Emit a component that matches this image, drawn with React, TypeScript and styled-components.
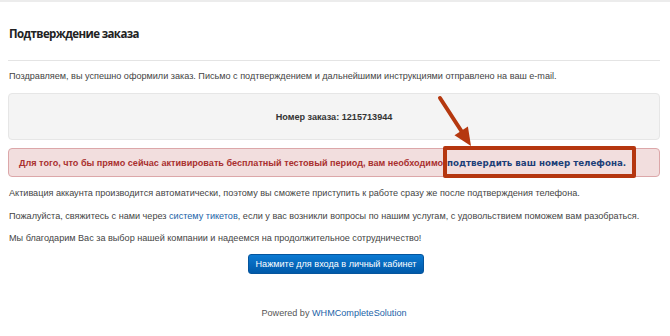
import React from "react";
import styled, { createGlobalStyle } from "styled-components";

const Global = createGlobalStyle`
  html, body { margin: 0; padding: 0; background: #fff; }
  body { font-family: "Liberation Sans", Arial, sans-serif; color: #333; }
`;

const TopBar = styled.div`
  height: 2px;
  background: #ececec;
`;

const Page = styled.div`
  width: 652px;
  padding: 0 10px 0 8px;
  font-size: 9.1px;
  line-height: 14px;
`;

const Title = styled.h1`
  margin: 24px 0 0 1px;
  font-family: "Open Sans", sans-serif;
  font-weight: 700;
  font-size: 11.5px;
  letter-spacing: -0.6px;
  line-height: 16px;
  color: #222;
`;

const Rule = styled.hr`
  margin: 18px 0 0 0;
  border: 0;
  border-top: 1px solid #e4e4e4;
`;

const Para = styled.p<{ $top: number }>`
  margin: ${(p) => p.$top}px 0 0 1px;
  color: #444;
`;

const Well = styled.div`
  margin-top: 10px;
  height: 45px;
  background: #f4f4f4;
  border: 1px solid #e6e6e6;
  border-radius: 4px;
  display: flex;
  align-items: center;
  justify-content: center;
  font-weight: 700;
  color: #333;
`;

const Alert = styled.div`
  margin-top: 8px;
  height: 27px;
  background: #f2dede;
  border: 1px solid #dca7a9;
  border-radius: 4px;
  display: flex;
  align-items: center;
  padding-left: 10px;
  font-weight: 700;
  color: #a9302f;
`;

const PhoneLink = styled.span`
  position: relative;
  color: #1d3f78;
  margin-left: 4px;
  font-family: "DejaVu Sans", Verdana, sans-serif;
  font-size: 8.7px;
  &::after {
    content: "";
    position: absolute;
    left: -4px;
    right: -10px;
    top: -10px;
    bottom: -8px;
    border: 4px solid #b5360f;
    border-radius: 2px;
  }
`;

const Arrow = styled.svg`
  position: absolute;
  left: -11px;
  top: -62px;
  overflow: visible;
`;

const TextLink = styled.span`
  color: #1b63a8;
`;

const ButtonRow = styled.div`
  display: flex;
  justify-content: center;
  margin-top: 9px;
`;

const Button = styled.button`
  height: 20px;
  width: 176px;
  padding: 0;
  border: 1px solid #05559d;
  border-radius: 3px;
  background: linear-gradient(#0c7ad2, #0059a9);
  color: #fff;
  font-family: "Liberation Sans", Arial, sans-serif;
  font-size: 9.1px;
  margin-left: 4px;
`;

const Footer = styled.div`
  margin-top: 32px;
  text-align: center;
  color: #555;
`;

export default function App() {
  return (
    <>
      <Global />
      <TopBar />
      <Page>
        <Title>Подтверждение заказа</Title>
        <Rule />
        <Para $top={8}>
          Поздравляем, вы успешно оформили заказ. Письмо с подтверждением и дальнейшими инструкциями отправлено на ваш e-mail.
        </Para>
        <Well>Номер заказа: 1215713944</Well>
        <Alert>
          Для того, что бы прямо сейчас активировать бесплатный тестовый период, вам необходимо
          <PhoneLink>
            подтвердить ваш номер телефона.
            <Arrow width="45" height="55" viewBox="0 0 45 55">
              <line x1="4" y1="4" x2="26" y2="38" stroke="#b5380f" strokeWidth="4" strokeLinecap="round" />
              <polygon points="35,52 18.5,41.2 31.9,32.6" fill="#b5380f" />
            </Arrow>
          </PhoneLink>
        </Alert>
        <Para $top={9}>
          Активация аккаунта производится автоматически, поэтому вы сможете приступить к работе сразу же после подтверждения телефона.
        </Para>
        <Para $top={9}>
          Пожалуйста, свяжитесь с нами через <TextLink>систему тикетов</TextLink>, если у вас возникли вопросы по нашим услугам, с удовольствием поможем вам разобраться.
        </Para>
        <Para $top={8}>
          Мы благодарим Вас за выбор нашей компании и надеемся на продолжительное сотрудничество!
        </Para>
        <ButtonRow>
          <Button>Нажмите для входа в личный кабинет</Button>
        </ButtonRow>
        <Footer>
          Powered by <TextLink>WHMCompleteSolution</TextLink>
        </Footer>
      </Page>
    </>
  );
}
